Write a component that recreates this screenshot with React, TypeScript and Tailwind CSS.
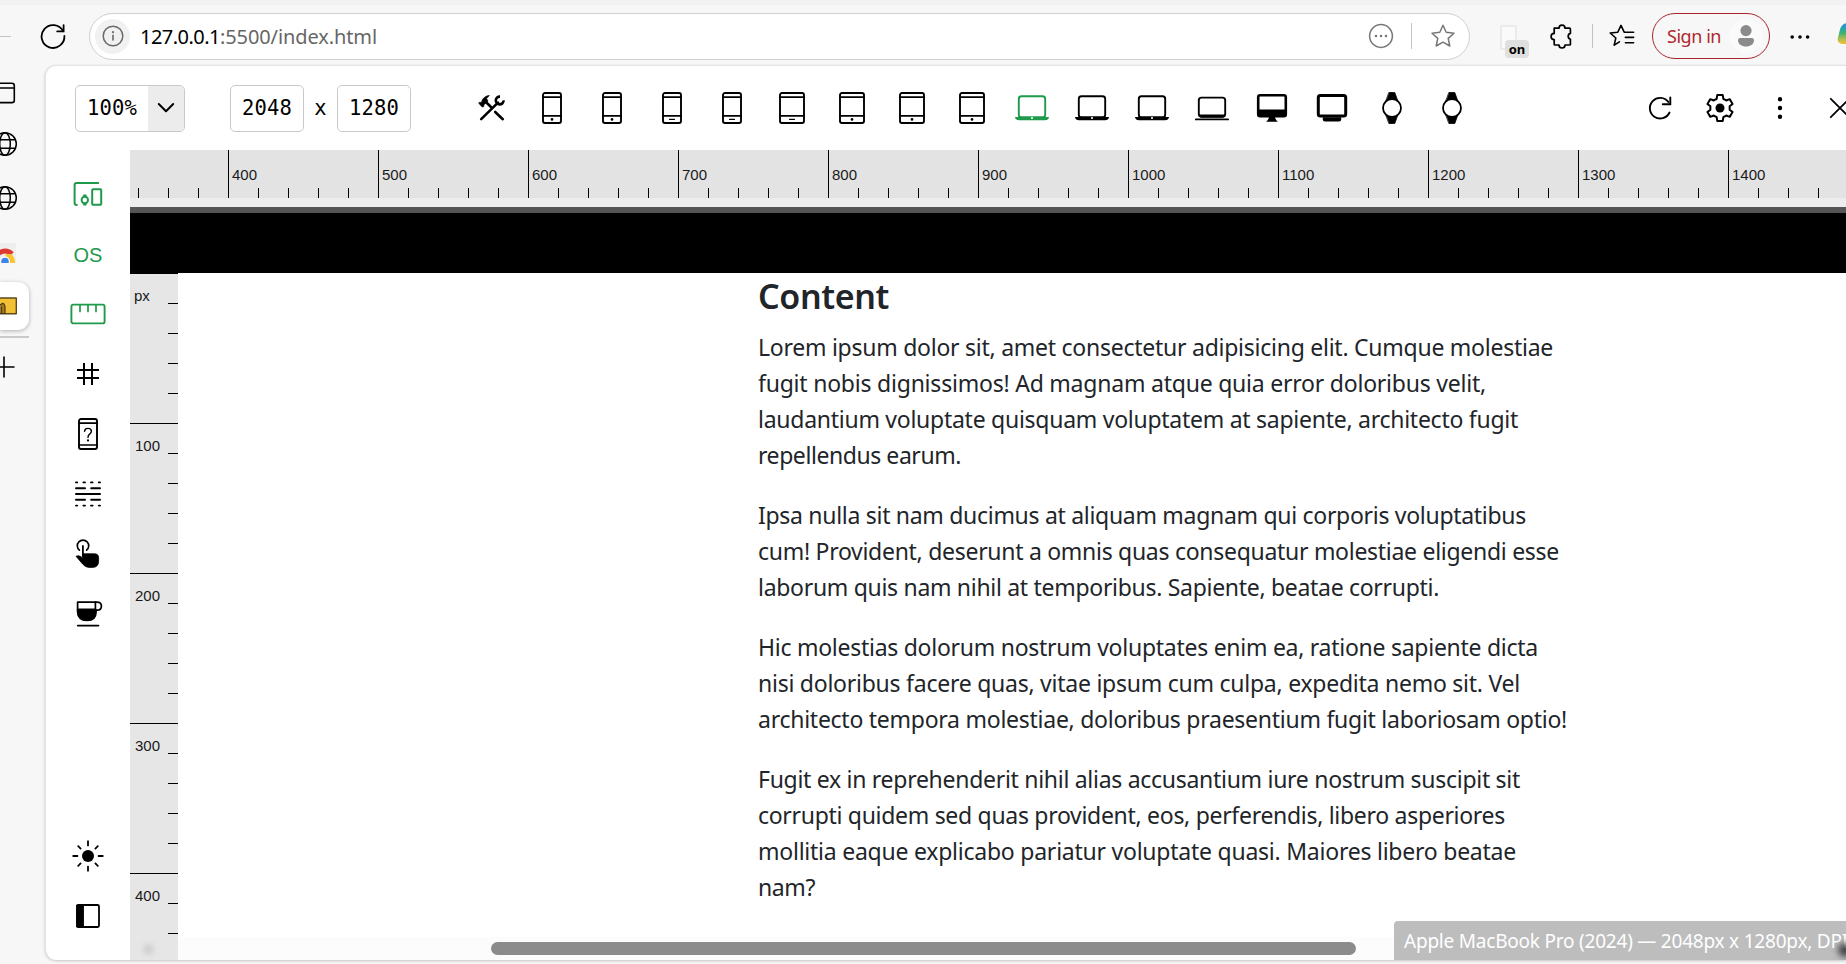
import { useLayoutEffect, useRef, type ReactNode } from "react";

const SANS = "font-['Noto_Sans','Open_Sans',sans-serif]";

/* Text that spreads its letters so that it fills exactly `width` pixels. */
function Fit({ width, className = "", children }: { width: number; className?: string; children: ReactNode }) {
  const ref = useRef<HTMLSpanElement>(null);
  useLayoutEffect(() => {
    const el = ref.current;
    if (!el) return;
    el.style.letterSpacing = "0px";
    const count = (el.textContent ?? "").length;
    el.style.letterSpacing = (width - el.getBoundingClientRect().width) / count + "px";
  }, [width]);
  return (
    <span ref={ref} className={"inline-block whitespace-pre " + className}>
      {children}
    </span>
  );
}

function Icon({ w = 32, h = 32, className = "", children }: { w?: number; h?: number; className?: string; children: ReactNode }) {
  return (
    <svg width={w} height={h} viewBox={`0 0 ${w} ${h}`} className={"shrink-0 " + className} fill="none" stroke="currentColor" strokeWidth={1.7} strokeLinecap="round" strokeLinejoin="round">
      {children}
    </svg>
  );
}

function Handheld({ wide = false, dash = false }: { wide?: boolean; dash?: boolean }) {
  const x = wide ? 4 : 7;
  const width = wide ? 24 : 18;
  return (
    <Icon>
      <rect x={x} y={1} width={width} height={30} rx={2} strokeWidth={1.9} />
      <path d={`M${x} 5.2h${width}M${x} 23.9h${width}`} strokeWidth={1.8} />
      {dash ? <path d="M13.6 27.4h4.8" strokeWidth={1.3} /> : <circle cx={16} cy={27.4} r={1.3} fill="currentColor" stroke="none" />}
    </Icon>
  );
}

function Laptop({ className = "" }: { className?: string }) {
  return (
    <Icon w={36} className={className}>
      <rect x={4.8} y={4.3} width={26.4} height={21} rx={2.6} strokeWidth={1.9} />
      <path d="M1 25H35C35 27 33 28.3 31 28.3H5C3 28.3 1 27 1 25Z" fill="currentColor" stroke="none" />
      <circle cx={18} cy={26} r={1.1} fill="white" stroke="none" />
    </Icon>
  );
}

function SlimLaptop() {
  return (
    <Icon w={36}>
      <rect x={4.8} y={5.6} width={26.4} height={19} rx={2.6} strokeWidth={1.9} />
      <path d="M5 22.5H31L29.5 25.8H6.5Z" fill="currentColor" stroke="none" />
      <path d="M1.8 27.4h32.4" strokeWidth={1.7} />
    </Icon>
  );
}

function Monitor() {
  return (
    <Icon>
      <rect x={2.2} y={3.3} width={27.6} height={21} rx={2} strokeWidth={2.6} />
      <path d="M2 17.6H30V24.7H2Z" fill="currentColor" stroke="none" />
      <path d="M13 25H19C19.3 27.4 20.6 28.6 22 29.8H10C11.4 28.6 12.7 27.4 13 25Z" fill="currentColor" stroke="none" />
    </Icon>
  );
}

function Display() {
  return (
    <Icon>
      <rect x={2.3} y={3.6} width={27.4} height={20.3} rx={2} strokeWidth={3} />
      <path d="M6.8 25.2H25.2V27.5Q25.2 29.6 23 29.6H9Q6.8 29.6 6.8 27.5Z" fill="currentColor" stroke="none" />
    </Icon>
  );
}

function Watch() {
  return (
    <Icon>
      <path d="M13.2 0.5H18.8L22.2 10H9.8ZM13.2 31.5H18.8L22.2 22H9.8Z" fill="currentColor" strokeWidth={0.8} />
      <circle cx={16} cy={16} r={9} fill="white" strokeWidth={1.8} />
    </Icon>
  );
}

function Tools() {
  return (
    <Icon>
      <path d="M5.2 27.2L22 10.6" strokeWidth={2.6} />
      <path d="M9.4 9.5L15 15M19.2 20L26.8 27.2" strokeWidth={2.6} />
      <path d="M3.2 10.4L5.6 10.2 6.3 7.8C8 5 10.5 3.6 13.4 3.5L10.6 6.6 12 9 8.2 12.6 7.5 14.8 6 14.9 3 11.6Z" fill="currentColor" strokeWidth={0.6} />
      <path d="M24 4.6A3.9 3.9 0 1 0 27.6 8.4" strokeWidth={2.6} strokeLinecap="butt" />
    </Icon>
  );
}

function gearPath() {
  const at = (r: number, deg: number) => {
    const a = (deg * Math.PI) / 180;
    return `${(16 + r * Math.cos(a)).toFixed(2)} ${(16 + r * Math.sin(a)).toFixed(2)}`;
  };
  const points: string[] = [];
  for (let i = 0; i < 6; i++) {
    const mid = -90 + i * 60;
    points.push(at(9.8, mid - 20), at(13.2, mid - 12), at(13.2, mid + 12), at(9.8, mid + 20));
  }
  return "M" + points.join("L") + "Z";
}

function Globe() {
  return (
    <Icon w={26} h={26} className="-ml-2">
      <circle cx={13} cy={13} r={11.3} strokeWidth={1.5} />
      <ellipse cx={13} cy={13} rx={5.3} ry={11.3} strokeWidth={1.5} />
      <path d="M2.6 8.8h20.8M2.6 17.2h20.8" strokeWidth={1.5} />
    </Icon>
  );
}

function Header() {
  return (
    <header className="flex h-[65px] shrink-0 items-center border-t-[5px] border-[#f2f2f2] bg-[#f7f7f7] pt-[2px]">
      <div className="h-px w-[11px] shrink-0 bg-[#c4c4c4]" />
      <Icon w={28} h={28} className="ml-[28px]">
        <path d="M24.1 9.2A11.4 11.4 0 1 0 25.4 14" strokeWidth={1.8} />
        <path d="M24.6 3.2V9.4H18.2" strokeWidth={1.8} strokeLinejoin="miter" />
      </Icon>
      <div className="ml-[22px] flex h-[47px] w-[1381px] shrink-0 items-center rounded-full border border-[#cfcfcf] bg-white pl-[5px]">
        <div className="flex size-[35px] items-center justify-center rounded-full bg-[#f1f1f1]">
          <Icon w={24} h={24} className="text-[#6a6a6a]">
            <circle cx={12} cy={12} r={9.8} strokeWidth={1.5} />
            <path d="M12 11.4V16" strokeWidth={1.6} />
            <circle cx={12} cy={8.2} r={1.1} fill="currentColor" stroke="none" />
          </Icon>
        </div>
        <div className={"ml-[10px] pt-[2px] text-[20px] leading-none text-[#666] " + SANS}>
          <Fit width={80} className="text-black">127.0.0.1</Fit>
          <Fit width={157}>:5500/index.html</Fit>
        </div>
        <div className="ml-auto mr-[13px] flex items-center text-[#777]">
          <Icon w={26} h={26}>
            <circle cx={13} cy={13} r={11.4} strokeWidth={1.5} />
            <path d="M8 13h.01M13 13h.01M18 13h.01" strokeWidth={2.6} />
          </Icon>
          <div className="ml-[17px] h-[26px] w-px bg-[#c6c6c6]" />
          <Icon w={26} h={26} className="ml-[18px]">
            <path d="M13 2.3L16.2 9.3 24 10.2 18.2 15.4 19.8 23 13 19.2 6.2 23 7.8 15.4 2 10.2 9.8 9.3Z" strokeWidth={1.5} />
          </Icon>
        </div>
      </div>
      <div className="relative ml-[30px] mt-[12px] h-[34px] w-[30px] shrink-0">
        <div className="h-[25px] w-[17px] border-2 border-[#ebebeb] bg-[#fafafa]" />
        <div className={"absolute left-[5px] top-[15px] flex h-[18px] w-[24px] items-center justify-center rounded bg-[#dfdfdf] pt-px text-[13px] font-bold leading-none text-black " + SANS}>
          on
        </div>
      </div>
      <Icon w={26} h={26} className="ml-[18px]">
        <path d="M6.2 5.2H11A3 3 0 0 1 17 5.2H21.4Q22.4 5.2 22.4 6.2V10.4A3 3 0 0 0 22.4 16.2V21.2Q22.4 22 21.6 22H17A3 3 0 0 1 11 22H7Q6.2 22 6.2 21.2V16.6A3 3 0 0 1 6.2 10.4Z" strokeWidth={1.7} />
      </Icon>
      <div className="ml-[18px] h-[24px] w-px shrink-0 bg-[#c2c2c2]" />
      <Icon w={28} h={26} className="ml-[15px]">
        <path d="M11.4 18.8L6.2 22.2 7.8 15 2.2 10 9.8 9.2 13 2.4 16.2 9.2M17.4 14.4H25.6M17.4 19.8H25.6M16.2 9.2H25.6" strokeWidth={1.6} />
      </Icon>
      <div className="ml-[16px] flex h-[46px] w-[118px] shrink-0 items-center rounded-full border-[1.5px] border-[#a4262c] pl-[14px]">
        <span className={"text-[18px] leading-none text-[#b0272e] " + SANS}>
          <Fit width={54}>Sign in</Fit>
        </span>
        <div className="ml-[8px] flex size-[34px] items-center justify-center rounded-full bg-[#fafafa] text-[#8b8b8b]">
          <Icon w={20} h={24}>
            <circle cx={10} cy={6.6} r={5.6} fill="currentColor" stroke="none" />
            <path d="M4.2 14H15.8Q18 14 18 16.2C18 20 14.5 22.5 10 22.5S2 20 2 16.2Q2 14 4.2 14Z" fill="currentColor" stroke="none" />
          </Icon>
        </div>
      </div>
      <Icon w={24} h={10} className="ml-[18px]">
        <path d="M4.2 6h.01M12 6h.01M19.6 6h.01" strokeWidth={3.6} />
      </Icon>
      <div className="mb-[6px] ml-[27px] h-[21px] w-[20px] shrink-0 skew-x-[-14deg] rounded-[6px] bg-linear-to-b from-[#1c8fe8] via-[#3fb469] to-[#f4c12c]" />
    </header>
  );
}

function TabStrip() {
  return (
    <nav className="flex w-[45px] shrink-0 flex-col overflow-hidden bg-[#f7f7f7]">
      <Icon w={24} h={22} className="-ml-2 mt-[17px]">
        <rect x={1} y={1.2} width={21.3} height={19.4} rx={2.4} strokeWidth={1.6} />
        <path d="M1 6h21.3" strokeWidth={1.6} />
      </Icon>
      <div className="mt-[27px]">
        <Globe />
      </div>
      <div className="mt-[28px]">
        <Globe />
      </div>
      <div className="mt-[32px] h-[20px] w-[16px] overflow-hidden bg-[#eee]">
        <Icon w={22} h={22} className="-ml-[6px]">
          <path d="M1 18.5A10 10 0 0 1 18 11" stroke="#dd3b31" strokeWidth={5} strokeLinecap="butt" />
          <path d="M11 11H17Q21 14 21 20H15Z" fill="#fbc42d" stroke="none" />
          <circle cx={11} cy={18.6} r={5} fill="white" stroke="none" />
          <circle cx={11} cy={18.6} r={3.8} fill="#3f83ee" stroke="none" />
        </Icon>
      </div>
      <div className="mt-[19px] flex h-[48px] w-[29px] items-center rounded-r-[11px] bg-white shadow-[0_1px_4px_rgba(0,0,0,0.3)]">
        <Icon w={18} h={18}>
          <rect x={-4} y={1} width={20.3} height={15.8} fill="#f2c033" stroke="#5c4a1c" strokeWidth={1.4} />
          <path d="M-2 16.5V7.5H1Q4 4.5 5 9.5V16.5Z" fill="#a57922" stroke="#4b3a14" strokeWidth={1.2} />
          <path d="M1.6 16V10" stroke="#4b3a14" strokeWidth={1} />
        </Icon>
      </div>
      <div className="mt-[6px] h-[2px] w-[29px] bg-[#c9c9c9]" />
      <Icon w={24} h={24} className="-ml-2 mt-[17px]">
        <path d="M2 12H22M12 2V22" strokeWidth={1.6} />
      </Icon>
    </nav>
  );
}

const FIELD = "flex h-[47px] shrink-0 items-center justify-center rounded-[5px] border border-[#c9c9c9] bg-white";
const MONO = "font-['DejaVu_Sans_Mono','Liberation_Mono',monospace] text-[20.5px] leading-none text-black";

function Toolbar() {
  return (
    <div className="flex h-[84px] shrink-0 items-center pl-[29px]">
      <div className={FIELD + " w-[110px] overflow-hidden"}>
        <div className={"flex w-[72px] justify-center " + MONO}>
          <Fit width={50}>100%</Fit>
        </div>
        <div className="flex h-full flex-1 items-center justify-center bg-[#ececec]">
          <Icon w={18} h={12}>
            <path d="M1.8 2L9 9.2 16.2 2" strokeWidth={2} />
          </Icon>
        </div>
      </div>
      <div className={FIELD + " ml-[45px] w-[74px] " + MONO}>
        <Fit width={50}>2048</Fit>
      </div>
      <span className={"ml-[10px] w-[13px] shrink-0 text-center " + MONO}>x</span>
      <div className={FIELD + " ml-[10px] w-[74px] " + MONO}>
        <Fit width={50}>1280</Fit>
      </div>
      <div className="ml-[51px] grid shrink-0 auto-cols-[60px] grid-flow-col justify-items-center">
        <Tools />
        <Handheld />
        <Handheld />
        <Handheld dash />
        <Handheld dash />
        <Handheld wide dash />
        <Handheld wide />
        <Handheld wide />
        <Handheld wide />
        <Laptop className="text-[#1f9a4b]" />
        <Laptop />
        <Laptop />
        <SlimLaptop />
        <Monitor />
        <Display />
        <Watch />
        <Watch />
      </div>
      <div className="ml-[148px] grid shrink-0 auto-cols-[60px] grid-flow-col justify-items-center">
        <Icon>
          <path d="M25.5 20.5A10.3 10.3 0 1 1 24.4 10" strokeWidth={1.9} />
          <path d="M26.3 5.5V12.3H18.8" strokeWidth={1.9} strokeLinejoin="miter" />
        </Icon>
        <Icon>
          <path d={gearPath()} strokeWidth={2} />
          <circle cx={16} cy={16} r={4.5} fill="currentColor" stroke="none" />
        </Icon>
        <Icon>
          <path d="M16 7.2v.01M16 16v.01M16 24.8v.01" strokeWidth={4.4} />
        </Icon>
        <Icon>
          <path d="M6.8 6.8L25.2 25.2M25.2 6.8L6.8 25.2" strokeWidth={1.8} />
        </Icon>
      </div>
    </div>
  );
}

function Sidebar() {
  return (
    <div className="flex w-[84px] shrink-0 flex-col items-center pb-[14px] pt-[14px]">
      <div className="grid auto-rows-[60px] place-items-center text-black">
        <Icon className="text-[#1f9a4b]">
          <path d="M26.2 5H4.6Q2.6 5 2.6 7V25Q2.6 27 4.8 27" strokeWidth={2} />
          <rect x={20.2} y={11.2} width={9} height={15.6} rx={0.8} strokeWidth={2} />
          <circle cx={12.8} cy={22} r={3.2} strokeWidth={2} />
          <path d="M11 18L11.6 16.8H14L14.6 18ZM11 26L11.6 27.2H14L14.6 26Z" fill="currentColor" strokeWidth={0.5} />
        </Icon>
        <span className="pt-px font-['Liberation_Sans',sans-serif] text-[20px] leading-none text-[#1f9a4b]">OS</span>
        <Icon w={36} className="text-[#1f9a4b]">
          <rect x={1.4} y={6.6} width={33.2} height={18.8} rx={2} strokeWidth={1.9} />
          <path d="M10 7v6.4M18 7v6.4M26 7v6.4" />
        </Icon>
        <Icon>
          <path d="M12 5V27M20 5V27M5 12H27M5 20H27" strokeWidth={2} strokeLinecap="butt" />
        </Icon>
        <Icon>
          <rect x={7} y={1} width={18} height={30} rx={2} strokeWidth={1.9} />
          <path d="M7 5.2H25M7 27H25" />
          <path d="M12.6 13.2Q12.8 10.4 16 10.4Q19.4 10.4 19.4 13.2Q19.4 15 17.4 16.4Q16 17.4 16 19.4" strokeWidth={1.4} />
          <circle cx={16} cy={22.4} r={1.1} fill="currentColor" stroke="none" />
        </Icon>
        <Icon>
          <path d="M4 16H28M4 10.2H13M19.2 10.2H28M4 21.8H13M19.2 21.8H28" strokeWidth={2} />
          <path d="M4 4.4h1.2M11.4 4.4h1.6M19 4.4h1.6M26.8 4.4h1.2M4 27.6h1.2M11.4 27.6h1.6M19 27.6h1.6M26.8 27.6h1.2" strokeWidth={1.9} />
        </Icon>
        <Icon>
          <path d="M7.4 12.2A5.7 5.7 0 1 1 14.6 12.2" strokeWidth={1.6} />
          <path d="M10.9 8V18" strokeWidth={1.8} />
          <path d="M10.9 15.8H22.5Q26.6 15.8 26.6 19.8V23Q26.6 29.4 20.5 29.4H17.2Q13.4 29.4 10.6 26L4 18.2Q6.8 17 9.4 19L10.9 20Z" fill="currentColor" strokeWidth={0.8} />
        </Icon>
        <Icon>
          <path d="M5.6 4.2H25Q29.4 4.2 29.4 8.2T25 12.2H24V14Q24 22.4 15 22.4T5.6 14Z" strokeWidth={1.7} />
          <path d="M5.6 11H24V14Q24 22.4 15 22.4T5.6 14Z" fill="currentColor" strokeWidth={1} />
          <path d="M23.4 4.2V12" strokeWidth={1.7} />
          <path d="M5.8 27.6H26.4" strokeWidth={1.9} />
        </Icon>
      </div>
      <div className="mt-auto grid auto-rows-[60px] place-items-center text-black">
        <Icon>
          <circle cx={16} cy={16} r={6} fill="currentColor" stroke="none" />
          <path d="M16 1.2V5.4M16 26.6V30.8M1.2 16H5.4M26.6 16H30.8M6.2 6.2L8.6 8.6M23.4 23.4L25.8 25.8M6.2 25.8L8.6 23.4M23.4 8.6L25.8 6.2" strokeWidth={1.8} />
        </Icon>
        <Icon>
          <rect x={5} y={5} width={22} height={22} rx={1.4} strokeWidth={1.8} />
          <path d="M5 5H11.4V27H5Z" fill="currentColor" strokeWidth={1} />
        </Icon>
      </div>
    </div>
  );
}

function HorizontalRuler() {
  return (
    <div className="shrink-0 border-b-[6px] border-[#555] bg-[#ededed] pb-[9px]">
      <div className="flex h-[48px] items-end overflow-hidden bg-[#e3e3e3] pl-[8px]">
        {Array.from({ length: 58 }, (_, k) =>
          k % 5 === 3 ? (
            <div key={k} className="h-[48px] w-[30px] shrink-0 overflow-visible whitespace-nowrap border-l border-black pl-[3px] pt-[16px] font-['Liberation_Sans',sans-serif] text-[15px] leading-[17px] text-[#1a1a1a]">
              {400 + ((k - 3) / 5) * 100}
            </div>
          ) : (
            <div key={k} className="h-[10px] w-[30px] shrink-0 border-l border-black" />
          ),
        )}
      </div>
    </div>
  );
}

function VerticalRuler() {
  return (
    <div className="flex w-[48px] shrink-0 flex-col items-end overflow-hidden border-t border-black bg-[#e6e6e6] font-['Liberation_Sans',sans-serif] text-[15px] leading-[17px] text-[#1a1a1a]">
      <div className="h-[29px] w-full shrink-0 pl-[4px] pt-[13px]">px</div>
      {Array.from({ length: 22 }, (_, k) =>
        k % 5 === 4 ? (
          <div key={k} className="h-[30px] w-full shrink-0 border-t border-black pl-[5px] pt-[13px]">
            {((k + 1) / 5) * 100}
          </div>
        ) : (
          <div key={k} className="h-[30px] w-[10px] shrink-0 border-t border-black" />
        ),
      )}
    </div>
  );
}

const PARAGRAPHS: [string, number][][] = [
  [
    ["Lorem ipsum dolor sit, amet consectetur adipisicing elit. Cumque molestiae", 795],
    ["fugit nobis dignissimos! Ad magnam atque quia error doloribus velit,", 728],
    ["laudantium voluptate quisquam voluptatem at sapiente, architecto fugit", 760],
    ["repellendus earum.", 203],
  ],
  [
    ["Ipsa nulla sit nam ducimus at aliquam magnam qui corporis voluptatibus", 768],
    ["cum! Provident, deserunt a omnis quas consequatur molestiae eligendi esse", 801],
    ["laborum quis nam nihil at temporibus. Sapiente, beatae corrupti.", 681],
  ],
  [
    ["Hic molestias dolorum nostrum voluptates enim ea, ratione sapiente dicta", 780],
    ["nisi doloribus facere quas, vitae ipsum cum culpa, expedita nemo sit. Vel", 762],
    ["architecto tempora molestiae, doloribus praesentium fugit laboriosam optio!", 809],
  ],
  [
    ["Fugit ex in reprehenderit nihil alias accusantium iure nostrum suscipit sit", 762],
    ["corrupti quidem sed quas provident, eos, perferendis, libero asperiores", 747],
    ["mollitia eaque explicabo pariatur voluptate quasi. Maiores libero beatae", 758],
    ["nam?", 57],
  ],
];

function Viewport() {
  return (
    <div className="relative flex min-w-0 flex-1 flex-col bg-white">
      <article className={"flex-1 overflow-hidden pl-[580px] text-[#212529] " + SANS}>
        <h2 className="h-[56px] pt-[2px] text-[34px] font-semibold leading-[42px]">
          <Fit width={131}>Content</Fit>
        </h2>
        {PARAGRAPHS.map((lines, i) => (
          <p key={i} className="mb-6 text-[23px] leading-9">
            {lines.map(([text, width]) => (
              <span key={text} className="block h-9">
                <Fit width={width}>{text}</Fit>
              </span>
            ))}
          </p>
        ))}
      </article>
      <div className="absolute inset-x-0 bottom-0 flex h-[23px] items-center bg-[#fcfcfc] pl-[313px]">
        <div className="h-[13px] w-[865px] rounded-full bg-[#8b8b8b]" />
      </div>
      <div className={"absolute bottom-0 right-0 flex h-[39px] w-[452px] items-center overflow-hidden rounded-tl-[4px] bg-[#bdbdbd] pl-[10px] pt-[2px] text-[19px] leading-none text-white " + SANS}>
        <Fit width={444}>Apple MacBook Pro (2024) — 2048px x 1280px, DPI</Fit>
        <div className="absolute -right-[6px] bottom-[3px] size-[14px] rounded-full bg-[#444] blur-[3px]" />
      </div>
    </div>
  );
}

export default function App() {
  return (
    <div className="flex h-[964px] w-[1846px] flex-col overflow-hidden bg-[#f7f7f7] text-black">
      <Header />
      <div className="flex min-h-0 flex-1">
        <TabStrip />
        <main className="mb-[4px] flex min-w-0 flex-1 flex-col overflow-hidden rounded-l-[11px] border-l border-t border-[#e4e4e4] bg-white shadow-[0_1px_3px_rgba(0,0,0,0.2)]">
          <Toolbar />
          <div className="flex min-h-0 flex-1">
            <Sidebar />
            <div className="flex min-w-0 flex-1 flex-col">
              <HorizontalRuler />
              <div className="h-[60px] shrink-0 bg-black" />
              <div className="flex min-h-0 flex-1">
                <div className="relative flex">
                  <VerticalRuler />
                  <div className="absolute bottom-[6px] left-[14px] size-[9px] rounded-full bg-[#c4c4c4] blur-[3px]" />
                </div>
                <Viewport />
              </div>
            </div>
          </div>
        </main>
      </div>
    </div>
  );
}
